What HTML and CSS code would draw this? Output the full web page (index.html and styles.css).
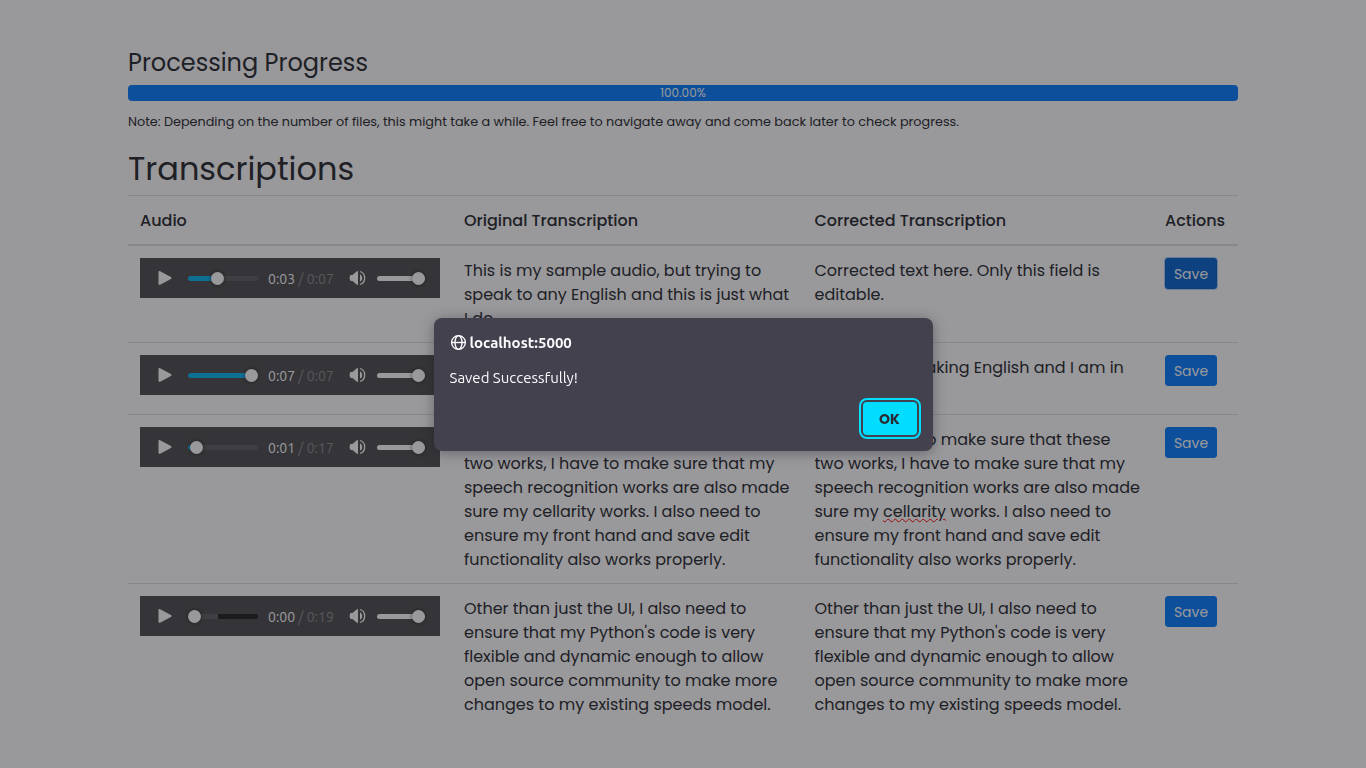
FILE: index.html
```html
<!DOCTYPE html>
<html lang="en">
<head>
<meta charset="utf-8">
<title>Transcriptions</title>
<meta name="viewport" content="width=device-width, initial-scale=1">
<link rel="stylesheet" href="styles.css">
</head>
<body>
<svg class="sprite" aria-hidden="true">
  <symbol id="play" viewBox="0 0 14 14"><path d="M.5 1.200v11.600c0 .9.8 1.400 1.600 1l10.800-5.800c.9-.5.9-1.500 0-2L2.100.2C1.300-.2.500.3.500 1.200z"/></symbol>
  <symbol id="volume" viewBox="0 0 18 16"><path d="M9 1v14c-.7 0-1.200-.2-1.700-.7L3.500 11H2.200C1.300 11 1 10.500 1 9.800L.5 8 1 6.200C1 5.500 1.300 5 2.200 5h1.300l3.800-3.300C7.800 1.200 8.300 1 9 1z"/><path d="M11 4.200c2.900 1.700 2.900 5.900 0 7.600z"/><path d="M11 1.500c6.200 1.800 6.200 11.200 0 13" fill="none" stroke="currentColor" stroke-width="1.300"/></symbol>
</svg>

<main class="container">
  <h4 class="progress-title" id="progress-title">Processing Progress</h4>
  <div class="progress" role="progressbar" aria-labelledby="progress-title" aria-valuenow="100">
    <div class="progress-bar" style="width: 100%">100.00%</div>
  </div>
  <p class="note"><small>Note: Depending on the number of files, this might take a while. Feel free to navigate away and come back later to check progress.</small></p>

  <h2 class="title">Transcriptions</h2>
  <table class="table">
    <colgroup><col class="col-audio"><col><col><col class="col-actions"></colgroup>
    <thead>
      <tr><th>Audio</th><th>Original Transcription</th><th>Corrected Transcription</th><th>Actions</th></tr>
    </thead>
    <tbody>
      <tr>
        <td class="audio-cell"><div class="player">
          <button class="icon-btn play" aria-label="Play"><svg><use href="#play"/></svg></button>
          <input class="range seek" type="range" aria-label="Position" value="40" style="--played: 40%; --loaded: 100%">
          <span class="time">0:03 <span class="total">/ 0:07</span></span>
          <button class="icon-btn mute" aria-label="Mute"><svg><use href="#volume"/></svg></button>
          <input class="range volume" type="range" aria-label="Volume" value="100">
        </div></td>
        <td>This is my sample audio, but trying to speak to any English and this is just what I do.</td>
        <td contenteditable="true" spellcheck="false">Corrected text here. Only this field is editable.</td>
        <td class="action-cell"><button class="btn btn-active">Save</button></td>
      </tr>
      <tr>
        <td class="audio-cell"><div class="player">
          <button class="icon-btn play" aria-label="Play"><svg><use href="#play"/></svg></button>
          <input class="range seek" type="range" aria-label="Position" value="100" style="--played: 100%; --loaded: 100%">
          <span class="time">0:07 <span class="total">/ 0:07</span></span>
          <button class="icon-btn mute" aria-label="Mute"><svg><use href="#volume"/></svg></button>
          <input class="range volume" type="range" aria-label="Volume" value="100">
        </div></td>
        <td>Now, I am speaking English and I am in</td>
        <td contenteditable="true" spellcheck="false">Now, I am speaking English and I am in</td>
        <td class="action-cell"><button class="btn">Save</button></td>
      </tr>
      <tr>
        <td class="audio-cell"><div class="player">
          <button class="icon-btn play" aria-label="Play"><svg><use href="#play"/></svg></button>
          <input class="range seek" type="range" aria-label="Position" value="4" style="--played: 4%; --loaded: 100%">
          <span class="time">0:01 <span class="total">/ 0:17</span></span>
          <button class="icon-btn mute" aria-label="Mute"><svg><use href="#volume"/></svg></button>
          <input class="range volume" type="range" aria-label="Volume" value="100">
        </div></td>
        <td>I just wanted to make sure that these two works, I have to make sure that my speech recognition works are also made sure my cellarity works. I also need to ensure my front hand and save edit functionality also works properly.</td>
        <td contenteditable="true" spellcheck="false">I just wanted to make sure that these two works, I have to make sure that my speech recognition works are also made sure my <span class="misspelled">cellarity</span> works. I also need to ensure my front hand and save edit functionality also works properly.</td>
        <td class="action-cell"><button class="btn">Save</button></td>
      </tr>
      <tr>
        <td class="audio-cell"><div class="player">
          <button class="icon-btn play" aria-label="Play"><svg><use href="#play"/></svg></button>
          <input class="range seek" type="range" aria-label="Position" value="0" style="--played: 0%; --loaded: 43%">
          <span class="time">0:00 <span class="total">/ 0:19</span></span>
          <button class="icon-btn mute" aria-label="Mute"><svg><use href="#volume"/></svg></button>
          <input class="range volume" type="range" aria-label="Volume" value="100">
        </div></td>
        <td>Other than just the UI, I also need to ensure that my Python's code is very flexible and dynamic enough to allow open source community to make more changes to my existing speeds model.</td>
        <td contenteditable="true" spellcheck="false">Other than just the UI, I also need to ensure that my Python's code is very flexible and dynamic enough to allow open source community to make more changes to my existing speeds model.</td>
        <td class="action-cell"><button class="btn">Save</button></td>
      </tr>
    </tbody>
  </table>
</main>

<div class="backdrop">
  <section class="dialog" role="alertdialog" aria-labelledby="origin" aria-describedby="message">
    <header class="dialog-head">
      <svg class="globe" viewBox="0 0 16 16" fill="none" stroke="currentColor" stroke-width="1.300" aria-hidden="true"><circle cx="8" cy="8" r="6.500"/><ellipse cx="8" cy="8" rx="3.300" ry="6.500"/><path d="M1.500 8h13"/></svg>
      <strong id="origin">localhost:5000</strong>
    </header>
    <p class="message" id="message">Saved Successfully!</p>
    <button class="ok">OK</button>
  </section>
</div>
</body>
</html>
```
FILE: styles.css
```css
* { box-sizing: border-box; }

body {
  margin: 0;
  background: #fff;
  color: #212529;
  font-family: Poppins, Inter, "Open Sans", sans-serif;
  font-size: 16px;
  line-height: 24px;
}

button, input { font: inherit; }

.sprite { display: none; }

.container {
  max-width: 1140px;
  margin: 0 auto;
  padding: 48px 15px 0;
}

.progress-title {
  margin: 0 0 8px;
  font-size: 24px;
  font-weight: 400;
  line-height: 29px;
}

.progress {
  height: 16px;
  overflow: hidden;
  border-radius: 4px;
  background: #e9ecef;
}

.progress-bar {
  height: 100%;
  background: #007bff;
  color: #fff;
  font-size: 12px;
  line-height: 16px;
  text-align: center;
}

.note { margin: 8px 0 16px; }
.note small { font-size: 80%; }

.title {
  margin: 0 0 7px;
  font-size: 32px;
  font-weight: 400;
  line-height: 38px;
}

.table {
  width: 100%;
  table-layout: fixed;
  border-collapse: collapse;
}

.col-audio { width: 324px; }
.col-actions { width: 85px; }

th, td {
  padding: 13px 12px 11px;
  border-top: 1px solid #dee2e6;
  text-align: left;
  vertical-align: top;
}

th {
  padding-right: 0;
  border-bottom: 2px solid #dee2e6;
  font-weight: 500;
}

.audio-cell { padding: 12px 12px 19px; }
.action-cell { padding: 12px; }

.misspelled {
  text-decoration: underline wavy #f00 1px;
  text-underline-offset: 1px;
}

.btn {
  display: block;
  width: 52px;
  padding: 5px 0 3px;
  border: 1px solid #007bff;
  border-radius: 3px;
  background: #007bff;
  color: #fff;
  font-size: 14px;
  line-height: 21px;
}

.btn-active {
  border-color: #005cbf;
  background: #0062cc;
  box-shadow: 0 0 0 1px rgba(38, 143, 255, .4);
}

.player {
  display: flex;
  align-items: center;
  width: 300px;
  height: 40px;
  padding: 0 15px 0 18px;
  background: #4a4a4b;
  color: #fff;
}

.icon-btn {
  flex: none;
  display: flex;
  padding: 0;
  border: 0;
  background: none;
  color: inherit;
  fill: currentColor;
}

.play svg { width: 14px; height: 14px; }
.mute svg { width: 18px; height: 16px; }

.range {
  appearance: none;
  height: 13px;
  margin: 0;
  background: none;
}

.seek { width: 70px; margin: 0 10px 0 16px; }
.volume { width: 48px; margin-left: 10px; }
.mute { margin-left: auto; }

.range::-webkit-slider-runnable-track {
  height: 5px;
  border-radius: 3px;
  background: #fff;
}

.seek::-webkit-slider-runnable-track {
  background: linear-gradient(90deg, #00b6f0 var(--played), #5c5c5e var(--played) var(--loaded), #1a1a1b var(--loaded));
}

.range::-webkit-slider-thumb {
  appearance: none;
  width: 13px;
  height: 13px;
  margin-top: -4px;
  border-radius: 50%;
  background: #fff;
  box-shadow: 0 0 4px rgba(0, 0, 0, .6);
}

.time {
  padding-top: 1px;
  font-family: Ubuntu, "Noto Sans", sans-serif;
  font-size: 14px;
}

.total { color: #8a8a8c; }

.backdrop {
  position: fixed;
  inset: 0;
  display: flex;
  align-items: center;
  justify-content: center;
  background: rgba(28, 27, 34, .45);
}

.dialog {
  display: flex;
  flex-direction: column;
  width: 499px;
  padding: 15px 16px 16px;
  border-radius: 8px;
  background: #42414d;
  box-shadow: 0 2px 14px rgba(28, 27, 34, .4);
  color: #fbfbfe;
  font-family: Ubuntu, "Noto Sans", sans-serif;
  font-size: 15px;
  line-height: 20px;
}

.dialog-head {
  display: flex;
  align-items: center;
  gap: 3px;
}

.globe { width: 17px; height: 17px; }

.message { margin: 15px 0 14px; }

.ok {
  align-self: flex-end;
  width: 54px;
  height: 33px;
  padding: 1px 0 0;
  border: 0;
  border-radius: 4px;
  outline: 2px solid #0df;
  outline-offset: 2px;
  background: #0df;
  color: #2b2a33;
  font-family: Poppins, Inter, sans-serif;
  font-size: 14px;
  font-weight: 700;
}
```
